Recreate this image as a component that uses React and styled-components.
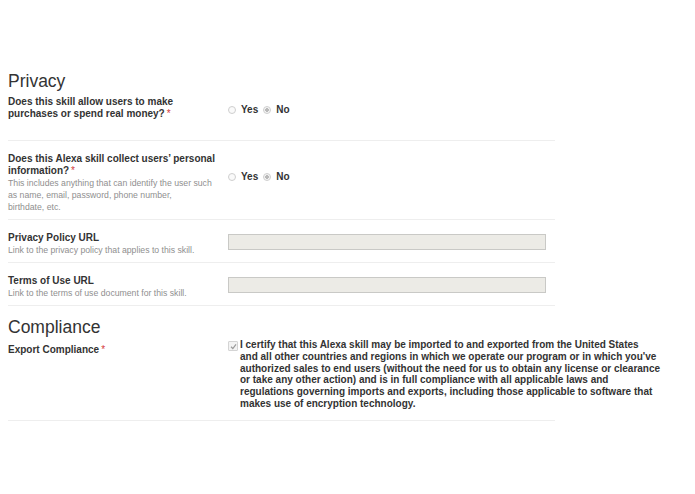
import React from "react";
import styled, { createGlobalStyle } from "styled-components";

const Global = createGlobalStyle`
  html, body { margin: 0; padding: 0; background: #fff; }
  body { font-family: "Liberation Sans", Arial, sans-serif; color: #333; }
`;

const Page = styled.div`
  width: 695px;
  height: 494px;
  padding: 70px 0 0 8px;
  box-sizing: border-box;
  overflow: hidden;
`;

const Section = styled.section`
  width: 547px;
  margin-top: ${(p) => p.$mt || 0}px;
`;

const Heading = styled.h2`
  margin: 0;
  font-size: 17.5px;
  font-weight: normal;
  line-height: 22px;
  color: #333;
`;

const Row = styled.div`
  display: flex;
  align-items: flex-start;
  padding: ${(p) => p.$pad || "12px 0 6px 0"};
  border-bottom: 1px solid #eeeeee;
`;

const LabelCol = styled.div`
  width: 220px;
  flex: none;
`;

const Label = styled.div`
  font-size: 10px;
  font-weight: bold;
  line-height: 12px;
  color: #333;
  padding-top: ${(p) => p.$top || 0}px;
`;

const Req = styled.span`
  color: #d43a3a;
  font-weight: normal;
  margin-left: 2px;
`;

const Help = styled.div`
  font-size: 8.7px;
  line-height: 12px;
  color: #8f8f8f;
  width: 216px;
`;

const Control = styled.div`
  flex: 1;
  padding-top: ${(p) => p.$top || 0}px;
  display: flex;
  align-items: center;
`;

const RadioGroup = styled.div`
  display: flex;
  align-items: center;
  font-size: 10px;
  font-weight: bold;
  line-height: 12px;
  color: #333;
`;

const Radio = styled.span`
  width: 6px;
  height: 6px;
  border-radius: 50%;
  border: 1px solid #cfcfcf;
  background: ${(p) => (p.$checked ? "radial-gradient(circle, #b9b9b9 0 1.6px, #f4f4f4 2px)" : "#fafafa")};
  margin: 0 5px 0 ${(p) => p.$gap || 0}px;
  flex: none;
`;

const TextInput = styled.div`
  width: 316px;
  height: 14px;
  background: #ecebe6;
  border: 1px solid #c9c9c6;
  margin-top: 2px;
`;

const CheckWrap = styled.div`
  display: flex;
  align-items: flex-start;
  flex: none;
`;

const CheckBox = styled.span`
  width: 8px;
  height: 8px;
  border: 1px solid #d4d4d4;
  background: #f3f3f3;
  border-radius: 1px;
  flex: none;
  margin: 2px 2px 0 0;
  display: flex;
  align-items: center;
  justify-content: center;
`;

const CheckText = styled.div`
  width: 440px;
  font-size: 10px;
  font-weight: bold;
  line-height: 11.8px;
  color: #333;
`;

function YesNo({ top }) {
  return (
    <Control $top={top}>
      <RadioGroup>
        <Radio />
        Yes
        <Radio $checked $gap={5} />
        No
      </RadioGroup>
    </Control>
  );
}

const certifyLines = [
  "I certify that this Alexa skill may be imported to and exported from the United States",
  "and all other countries and regions in which we operate our program or in which you've",
  "authorized sales to end users (without the need for us to obtain any license or clearance",
  "or take any other action) and is in full compliance with all applicable laws and",
  "regulations governing imports and exports, including those applicable to software that",
  "makes use of encryption technology.",
];

export default function App() {
  return (
    <Page>
      <Global />
      <Section>
        <Heading>Privacy</Heading>
        <Row $pad="4px 0 20px 0">
          <LabelCol>
            <Label>
              Does this skill allow users to make
              <br />
              purchases or spend real money?<Req>*</Req>
            </Label>
          </LabelCol>
          <YesNo top={8} />
        </Row>
        <Row $pad="12px 0 6px 0">
          <LabelCol>
            <Label>
              Does this Alexa skill collect users’ personal
              <br />
              information?<Req>*</Req>
            </Label>
            <Help>
              This includes anything that can identify the user such
              <br />
              as name, email, password, phone number,
              <br />
              birthdate, etc.
            </Help>
          </LabelCol>
          <YesNo top={18} />
        </Row>
        <Row>
          <LabelCol>
            <Label>Privacy Policy URL</Label>
            <Help>Link to the privacy policy that applies to this skill.</Help>
          </LabelCol>
          <Control>
            <TextInput />
          </Control>
        </Row>
        <Row>
          <LabelCol>
            <Label>Terms of Use URL</Label>
            <Help>Link to the terms of use document for this skill.</Help>
          </LabelCol>
          <Control>
            <TextInput />
          </Control>
        </Row>
      </Section>
      <Section $mt={10}>
        <Heading>Compliance</Heading>
        <Row $pad="1px 0 10px 0">
          <LabelCol>
            <Label $top={5}>
              Export Compliance<Req>*</Req>
            </Label>
          </LabelCol>
          <CheckWrap>
            <CheckBox>
              <svg width="7" height="7" viewBox="0 0 7 7">
                <path d="M1 3.8 L2.8 5.5 L6 1.3" fill="none" stroke="#9a9a9a" strokeWidth="1.2" />
              </svg>
            </CheckBox>
            <CheckText>
              {certifyLines.map((line, i) => (
                <React.Fragment key={i}>
                  {line}
                  {i < certifyLines.length - 1 && <br />}
                </React.Fragment>
              ))}
            </CheckText>
          </CheckWrap>
        </Row>
      </Section>
    </Page>
  );
}
